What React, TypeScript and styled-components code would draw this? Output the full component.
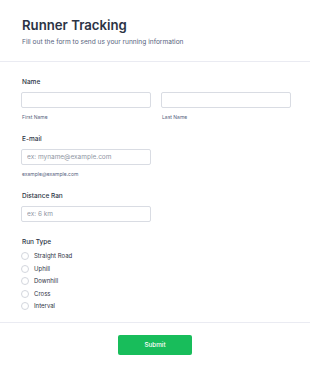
import styled, { createGlobalStyle } from "styled-components";

const GlobalStyle = createGlobalStyle`
  html, body {
    margin: 0;
    padding: 0;
    background: #ffffff;
  }
  body {
    font-family: Inter, "Noto Sans", sans-serif;
    color: #2c3345;
  }
  * {
    box-sizing: border-box;
  }
`;

const Form = styled.form`
  width: 310px;
  min-height: 371px;
  background: #ffffff;
  display: flex;
  flex-direction: column;
`;

const Header = styled.header`
  padding: 17px 22px 14px;
  border-bottom: 1px solid #eaebf2;
`;

const Title = styled.h1`
  margin: 0;
  font-size: 13.2px;
  line-height: 17px;
  font-weight: 600;
  color: #2c3345;
`;

const Subtitle = styled.p`
  margin: 3px 0 0;
  font-size: 6.6px;
  line-height: 10px;
  color: #57647e;
`;

const Body = styled.div`
  padding: 15px 19px 12px 21px;
  display: flex;
  flex-direction: column;
  gap: 13px;
  border-bottom: 1px solid #eaebf2;
`;

const Field = styled.div<{ $extra?: number }>`
  display: flex;
  flex-direction: column;
  margin-bottom: ${(p) => p.$extra ?? 0}px;
`;

const Label = styled.label`
  font-size: 6.5px;
  line-height: 10px;
  font-weight: 500;
  color: #2c3345;
  margin: 0 0 5px 1px;
`;

const Row = styled.div`
  display: flex;
  gap: 10px;
`;

const Column = styled.div<{ $width?: number }>`
  display: flex;
  flex-direction: column;
  width: ${(p) => (p.$width ? `${p.$width}px` : "auto")};
  flex: ${(p) => (p.$width ? "none" : "1")};
`;

const Input = styled.input`
  height: 16px;
  width: 100%;
  border: 1px solid #d9dce3;
  border-radius: 2px;
  padding: 0 5px;
  font-family: Inter, "Noto Sans", sans-serif;
  font-size: 6.5px;
  color: #2c3345;
  outline: none;
  &::placeholder {
    color: #8f96a3;
  }
`;

const Sub = styled.span`
  font-size: 5px;
  line-height: 8px;
  color: #57647e;
  margin: 5px 0 0 1px;
`;

const RadioList = styled.div`
  display: flex;
  flex-direction: column;
  gap: 4.6px;
`;

const RadioRow = styled.label`
  display: flex;
  align-items: center;
  gap: 5px;
  font-size: 6px;
  line-height: 8px;
  color: #2c3345;
`;

const Circle = styled.span`
  width: 8px;
  height: 8px;
  border-radius: 50%;
  border: 1px solid #d3d6dd;
  background: #ffffff;
  flex: none;
`;

const Footer = styled.div`
  display: flex;
  justify-content: center;
  padding: 12px 0 16px;
`;

const Submit = styled.button`
  width: 74px;
  height: 20px;
  border: none;
  border-radius: 2px;
  background: #18bd5b;
  color: #ffffff;
  font-family: Inter, "Noto Sans", sans-serif;
  font-size: 6.3px;
  font-weight: 500;
`;

const runTypes = ["Straight Road", "Uphill", "Downhill", "Cross", "Interval"];

function App() {
  return (
    <>
      <GlobalStyle />
      <Form onSubmit={(e) => e.preventDefault()}>
        <Header>
          <Title>Runner Tracking</Title>
          <Subtitle>Fill out the form to send us your running information</Subtitle>
        </Header>
        <Body>
          <Field>
            <Label>Name</Label>
            <Row>
              <Column>
                <Input />
                <Sub>First Name</Sub>
              </Column>
              <Column>
                <Input />
                <Sub>Last Name</Sub>
              </Column>
            </Row>
          </Field>
          <Field>
            <Label>E-mail</Label>
            <Column $width={130}>
              <Input placeholder="ex: myname@example.com" />
              <Sub>example@example.com</Sub>
            </Column>
          </Field>
          <Field $extra={2}>
            <Label>Distance Ran</Label>
            <Column $width={130}>
              <Input placeholder="ex: 6 km" />
            </Column>
          </Field>
          <Field>
            <Label>Run Type</Label>
            <RadioList>
              {runTypes.map((t) => (
                <RadioRow key={t}>
                  <Circle />
                  {t}
                </RadioRow>
              ))}
            </RadioList>
          </Field>
        </Body>
        <Footer>
          <Submit type="submit">Submit</Submit>
        </Footer>
      </Form>
    </>
  );
}

export default App;
